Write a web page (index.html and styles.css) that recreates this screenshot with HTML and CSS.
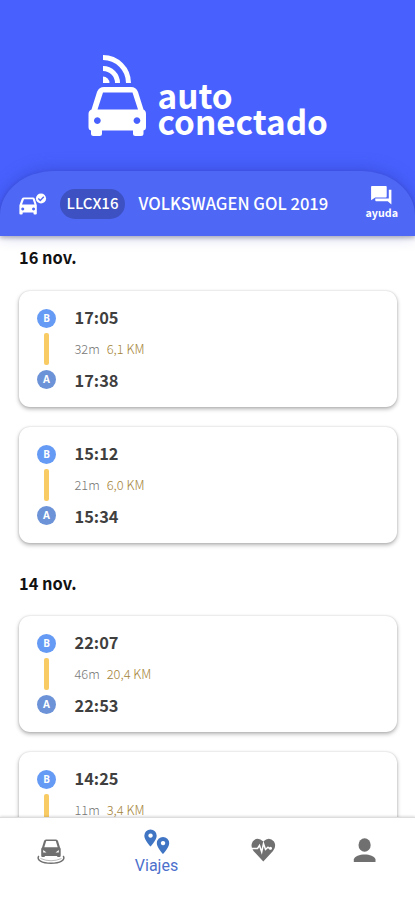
FILE: index.html
```html
<!DOCTYPE html>
<html lang="es">
<head>
<meta charset="utf-8">
<title>Auto Conectado</title>
<link rel="stylesheet" href="styles.css">
</head>
<body>
<div class="app">
  <header class="brand">
    <svg class="brand-icon" viewBox="88 54 59 83" width="59" height="83">
      <g fill="none" stroke="#fff">
        <path stroke-width="5" d="M103 57.5A25.500 25.500 0 0 1 128.500 83"/>
        <path stroke-width="5" d="M103 68.500A14.500 14.500 0 0 1 117.500 83"/>
      </g>
      <path fill="#fff" d="M103 76.500a6.500 6.500 0 0 1 6.500 6.500H103z"/>
      <path fill="#fff" fill-rule="evenodd" d="M104 87H131Q136 87 138 92L143.500 109.500Q146 110.500 146 114V127Q146 130 143.500 130.500V133.500Q143.500 136 141 136H135.500Q133 136 133 133.500V130.500H102V133.500Q102 136 99.500 136H93.500Q91 136 91 133.500V130.500Q88.500 130 88.500 127V114Q88.500 110.500 91.500 109.500L97 92Q99 87 104 87ZM103 92.500L97.500 109.500H138L132.500 92.500ZM97.300 117.200a3.400 3.400 0 1 0 .1 0ZM136.900 117.200a3.400 3.400 0 1 0 .1 0Z"/>
    </svg>
    <div class="brand-name"><span>auto</span><span>conectado</span></div>
  </header>
  <section class="vehicle">
    <svg class="vehicle-icon" viewBox="18 191 29 24" width="29" height="24">
      <path fill="#fff" fill-rule="evenodd" d="M24 196.500H33Q34.300 196.500 34.800 197.700L36.800 204.200V212.500Q36.800 213.500 35.800 213.500H34.500Q33.500 213.500 33.500 212.500V211.500H22.700V212.500Q22.700 213.500 21.700 213.500H20.400Q19.400 213.500 19.400 212.500V204.200L21.800 197.700Q22.400 196.500 24 196.500ZM24 198.200L22 203.500H34.500L32.700 198.200ZM22.700 206.500a1.500 1.500 0 1 0 .1 0ZM33.500 206.500a1.500 1.500 0 1 0 .1 0Z"/>
      <circle cx="41" cy="197.500" r="5.100" fill="#fff"/>
      <path d="M38.300 197.500l2 2 3.500-3.700" fill="none" stroke="#4e67ee" stroke-width="1.300"/>
    </svg>
    <span class="plate">LLCX16</span>
    <span class="model">VOLKSWAGEN GOL 2019</span>
    <div class="help">
      <svg viewBox="0 0 24 24" width="25" height="23" preserveAspectRatio="none"><path fill="#fff" d="M21.500 6H19v9H6v2c0 .55.45 1 1 1h11l3.500 3.500zM17 13V3c0-.55-.45-1-1-1H3c-.55 0-1 .45-1 1v14l4-3h10c.55 0 1-.45 1-1z"/></svg>
      <span>ayuda</span>
    </div>
  </section>
  <main class="trips">
    <h2>16 nov.</h2>
    <article class="card">
      <div class="track"><i class="dot b">B</i><i class="line"></i><i class="dot a">A</i></div>
      <div class="info"><b>17:05</b><p>32m<em>6,1 KM</em></p><b>17:38</b></div>
    </article>
    <article class="card">
      <div class="track"><i class="dot b">B</i><i class="line"></i><i class="dot a">A</i></div>
      <div class="info"><b>15:12</b><p>21m<em>6,0 KM</em></p><b>15:34</b></div>
    </article>
    <h2 class="second">14 nov.</h2>
    <article class="card">
      <div class="track"><i class="dot b">B</i><i class="line"></i><i class="dot a">A</i></div>
      <div class="info"><b>22:07</b><p>46m<em>20,4 KM</em></p><b>22:53</b></div>
    </article>
    <article class="card">
      <div class="track"><i class="dot b">B</i><i class="line"></i></div>
      <div class="info"><b>14:25</b><p>11m<em>3,4 KM</em></p></div>
    </article>
  </main>
  <nav class="tabs">
    <a class="tab">
      <svg viewBox="36 837 30 27" width="30" height="27">
        <path fill="#707070" fill-rule="evenodd" d="M46 838.500H56Q57.500 838.500 58 840L60 846.500Q60.700 847 60.700 848V854.500Q60.700 856 59.500 856H58Q57 856 57 855H45Q45 856 44 856H42.300Q41.200 856 41.200 854.500V848Q41.200 847 42 846.500L44 840Q44.500 838.500 46 838.500ZM46.200 840L44.300 846.300H57.700L55.800 840ZM43.200 849v2.500h3.300zM58.800 849v2.500h-3.300z"/>
        <path d="M38.800 855C36 859 42 862.200 51 862.200S66 859 63.200 855" fill="none" stroke="#707070" stroke-width="1.500"/>
        <path d="M40.500 857.500Q51 862 61.500 857.500" fill="none" stroke="#9a9a9a" stroke-width=".7"/>
      </svg>
    </a>
    <a class="tab active">
      <svg viewBox="144 829 26 25" width="26" height="25">
        <path fill="#4075c4" fill-rule="evenodd" d="M150.500 829.500a6.200 6.200 0 0 1 6.200 6.200C156.700 840 150.500 846.500 150.500 846.500S144.300 840 144.300 835.700a6.200 6.200 0 0 1 6.200-6.200ZM150.500 833.400a2.200 2.200 0 1 0 .1 0ZM163 837a6.200 6.200 0 0 1 6.200 6.200C169.200 847.500 163 854 163 854S156.800 847.500 156.800 843.200a6.200 6.200 0 0 1 6.200-6.200ZM163 840.900a2.200 2.200 0 1 0 .1 0Z"/>
      </svg>
      <span>Viajes</span>
    </a>
    <a class="tab">
      <svg viewBox="251 839 25 24" width="25" height="24">
        <path fill="#707070" d="M263.300 862.500L253.500 852Q250 847.500 252.700 842.500Q257.500 837 263.300 842.500Q269 837 274 842.500Q276.700 847.500 273 852Z"/>
        <path d="M251 849.500H257.500L259.500 846.500L261.700 853L263.500 844.500L265.500 850.500L268 848.200L269.500 849.500H271" fill="none" stroke="#fff" stroke-width="1.500"/>
        <circle cx="270.500" cy="849.300" r="1.500" fill="#fff"/>
      </svg>
    </a>
    <a class="tab">
      <svg viewBox="353 838 23 25" width="23" height="25">
        <ellipse cx="364.600" cy="845" rx="6.100" ry="6.700" fill="#707070"/>
        <path fill="#707070" d="M353.800 862V859.500C355.500 852.800 373.700 852.800 375.500 859.500V862Z"/>
      </svg>
    </a>
  </nav>
</div>
</body>
</html>
```
FILE: styles.css
```css
* { box-sizing: border-box; }
body { margin: 0; background: #fff; font-family: "Noto Sans CJK JP", "Noto Sans", sans-serif; }
.app { width: 415px; height: 900px; display: flex; flex-direction: column; overflow: hidden; background: #4861fe; }
svg { display: block; flex: none; }
i, em { font-style: normal; }

.brand { height: 171px; flex: none; display: flex; align-items: flex-start; padding: 54px 0 0 88px; }
.brand-name { display: flex; flex-direction: column; margin: 27.5px 0 0 10.5px; color: #fff; font-weight: 700; font-size: 33.3px; line-height: 26px; }

.vehicle { height: 65px; flex: none; display: flex; align-items: center; padding: 0 17px 0 18px; color: #fff; background: #4e67f4; border-radius: 54px 54px 0 0 / 44px 44px 0 0; box-shadow: 0 -2px 16px rgba(40, 50, 170, .36), 0 2px 4px rgba(0, 0, 0, .25); position: relative; z-index: 1; }
.plate { width: 65px; height: 30px; margin-left: 13px; border-radius: 15px; background: #3d51c2; text-align: center; font-weight: 500; font-size: 15px; line-height: 28px; }
.model { margin: -2px 0 0 13.5px; font-weight: 500; font-size: 16.6px; line-height: 30px; white-space: nowrap; }
.help { margin: -4px 0 0 auto; display: flex; flex-direction: column; align-items: center; font-weight: 700; font-size: 10.7px; line-height: 12px; }

.trips { flex: 1; min-height: 0; overflow: hidden; background: #fff; padding: 9px 18px 0 19px; }
h2 { margin: 0 0 21.5px; font-size: 16.4px; line-height: 24px; font-weight: 700; color: #111; }
h2.second { margin: 28px 0 21px; }
.card { height: 116px; margin-bottom: 20.3px; padding: 18px; display: flex; background: #fff; border-radius: 11px; box-shadow: 0 0 2px rgba(0, 0, 0, .16), 0 2px 4px rgba(0, 0, 0, .3); }
.track { width: 19px; display: flex; flex-direction: column; align-items: center; }
.dot { width: 19px; height: 19px; border-radius: 50%; color: #fff; text-align: center; font: 700 10px/19px "Open Sans", sans-serif; }
.dot.b { background: #659af5; }
.dot.a { background: #6c93d8; }
.line { width: 5px; height: 32px; margin: 5px 0; border-radius: 2px; background: #f8cb65; }
.info { margin: -2px 0 0 18.5px; color: #3f3f3f; }
.info b { display: block; font-size: 16.4px; line-height: 20px; }
.info p { margin: 12px 0 11px; font-size: 12.8px; line-height: 20px; font-weight: 300; color: #777; }
.info em { margin-left: 7px; color: #a48437; }

.tabs { height: 83px; flex: none; display: grid; grid-template-columns: 102px 109px 104px 99px; background: #fff; border-top: 1px solid #ddd; box-shadow: 0 -1px 2px rgba(0, 0, 0, .12); position: relative; z-index: 1; }
.tab { display: flex; flex-direction: column; align-items: center; padding-top: 20px; }
.tab.active { padding-top: 11px; color: #4c70cc; font: 16px/20px Roboto, sans-serif; }
.tab.active span { margin-top: 2px; }
```
